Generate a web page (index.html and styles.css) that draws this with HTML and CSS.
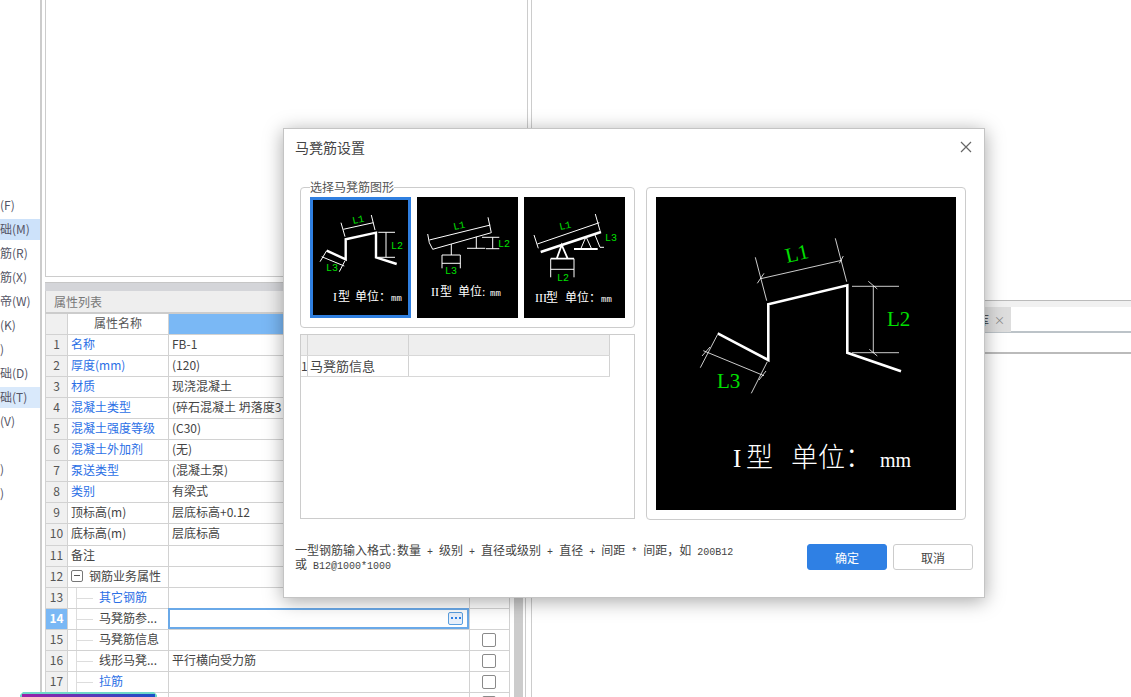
FILE: index.html
```html
<!DOCTYPE html>
<html>
<head>
    <title>马凳筋设置</title>
    <link rel="stylesheet" href="styles.css">
</head>
<body>
    <div class="app">
        <div class="side">
            <div class="side-item">(F)</div>
            <div class="side-item picked">础(M)</div>
            <div class="side-item">筋(R)</div>
            <div class="side-item">筋(X)</div>
            <div class="side-item">帝(W)</div>
            <div class="side-item">(K)</div>
            <div class="side-item">)</div>
            <div class="side-item">础(D)</div>
            <div class="side-item hovered">础(T)</div>
            <div class="side-item">(V)</div>
            <div class="side-item"></div>
            <div class="side-item">)</div>
            <div class="side-item">)</div>
        </div>

        <div class="left-col">
            <div class="top-pane"></div>
            <div class="band"></div>
            <div class="panel-title">属性列表</div>
            <div class="panel-body">
                <table class="props">
                    <colgroup>
                        <col class="col-num"><col class="col-name"><col class="col-value"><col class="col-check">
                    </colgroup>
                    <tr class="head"><td class="num"></td><td class="center">属性名称</td><td class="head-value"></td><td class="head-value"></td></tr>
                    <tr><td class="num">1</td><td class="link">名称</td><td>FB-1</td><td></td></tr>
                    <tr><td class="num">2</td><td class="link">厚度(mm)</td><td>(120)</td><td></td></tr>
                    <tr><td class="num">3</td><td class="link">材质</td><td>现浇混凝土</td><td></td></tr>
                    <tr><td class="num">4</td><td class="link">混凝土类型</td><td>(碎石混凝土 坍落度3</td><td></td></tr>
                    <tr><td class="num">5</td><td class="link">混凝土强度等级</td><td>(C30)</td><td></td></tr>
                    <tr><td class="num">6</td><td class="link">混凝土外加剂</td><td>(无)</td><td></td></tr>
                    <tr><td class="num">7</td><td class="link">泵送类型</td><td>(混凝土泵)</td><td></td></tr>
                    <tr><td class="num">8</td><td class="link">类别</td><td>有梁式</td><td></td></tr>
                    <tr><td class="num">9</td><td>顶标高(m)</td><td>层底标高+0.12</td><td></td></tr>
                    <tr><td class="num">10</td><td>底标高(m)</td><td>层底标高</td><td></td></tr>
                    <tr><td class="num">11</td><td>备注</td><td></td><td></td></tr>
                    <tr>
                        <td class="num">12</td>
                        <td><div class="group"><span class="fold"></span>钢筋业务属性</div></td>
                        <td></td><td></td>
                    </tr>
                    <tr><td class="num">13</td><td class="tree link">其它钢筋</td><td></td><td></td></tr>
                    <tr>
                        <td class="num selected">14</td>
                        <td class="tree">马凳筋参...</td>
                        <td class="edit-cell"><div class="editor"><span class="more"><i></i><i></i><i></i></span></div></td>
                        <td></td>
                    </tr>
                    <tr><td class="num">15</td><td class="tree">马凳筋信息</td><td></td><td class="check-cell"><span class="check"></span></td></tr>
                    <tr><td class="num">16</td><td class="tree">线形马凳...</td><td>平行横向受力筋</td><td class="check-cell"><span class="check"></span></td></tr>
                    <tr><td class="num">17</td><td class="tree link">拉筋</td><td></td><td class="check-cell"><span class="check"></span></td></tr>
                    <tr><td class="num"></td><td class="tree"></td><td></td><td class="check-cell"><span class="check"></span></td></tr>
                </table>
                <div class="scroll"></div>
                <div class="split-line"></div>
            </div>
        </div>

        <div class="right-col">
            <div class="tab-band">
                <div class="tab">库<span class="tab-close">×</span></div>
            </div>
            <div class="tab-sub"></div>
        </div>

        <div class="badge"></div>

        <div class="dialog">
            <div class="dialog-head">
                <span>马凳筋设置</span>
                <svg class="close" width="12" height="12" viewBox="0 0 12 12"><path d="M1 1 11 11M11 1 1 11"/></svg>
            </div>
            <div class="dialog-body">
                <div class="dialog-left">
                    <fieldset class="shapes">
                        <legend>选择马凳筋图形</legend>
                        <div class="thumbs">
                            <svg class="thumb active" width="101" height="121" viewBox="0 0 101 121">
                                <polyline class="thick" points="16.7,53.7 35.7,62.3 35.7,42.3 66,35.7 66,60.3 86.7,67"/>
                                <path class="thin" d="M31 25.7 35 39.7M61.3 18 65 33M33.3 32.3 63.3 25.7M68.3 35.3H85M68.3 60.3H85M76 35.3V60.3M16.7 53.7 10 64.7M35 63.7 29.3 74.7M11.7 59.7 34.3 69"/>
                                <text class="dim" x="43" y="27" transform="rotate(-12 43 27)">L1</text>
                                <text class="dim" x="81" y="52">L2</text>
                                <text class="dim" x="16" y="74">L3</text>
                                <text class="cap" x="23" y="104">I</text>
                                <text class="cap" x="28" y="104">型</text>
                                <text class="cap" x="45" y="104">单位：</text>
                                <text class="cap-unit" x="81" y="104">mm</text>
                            </svg>
                            <svg class="thumb" width="101" height="121" viewBox="0 0 101 121">
                                <path class="thin" d="M12.3 43 73.3 28M15.7 52.3 74.3 35.7M10.7 37 12.3 45.7 15.7 52.3M71 20.3 74.3 35.7M34.3 47V58M25 58H43.3M25 66.3H43.3M25 58V71.3M43.3 58V71.3M59.3 39.7V51.3M50 51.3H68.3M65 40.3H82.3M69 51.7H82.3M75.7 40.3V51.7"/>
                                <text class="dim" x="37" y="33" transform="rotate(-12 37 33)">L1</text>
                                <text class="dim" x="81" y="50">L2</text>
                                <text class="dim" x="28" y="77">L3</text>
                                <text class="cap" x="14" y="99">II</text>
                                <text class="cap" x="23" y="99">型</text>
                                <text class="cap" x="41" y="99">单位:</text>
                                <text class="cap-unit" x="73" y="99">mm</text>
                            </svg>
                            <svg class="thumb" width="101" height="121" viewBox="0 0 101 121">
                                <path class="thick" d="M16.7 55 77 35"/>
                                <path class="mid" d="M26.7 61.7H50M50 52H73.7M32.7 61.7 37.7 48 43.7 61.7"/>
                                <path class="thin" d="M56.7 52 62 39.7 67.7 52M13.3 47 75.3 25.7M10 38 14.3 51.3M71.3 17 76 33.7M71 38 76 50.3H80M26.7 61.7V80.3M50 61.7V80.3M26.7 72.3H50"/>
                                <text class="dim" x="36" y="33" transform="rotate(-12 36 33)">L1</text>
                                <text class="dim" x="81" y="44">L3</text>
                                <text class="dim" x="33" y="84">L2</text>
                                <text class="cap" x="11" y="105">III</text>
                                <text class="cap" x="22" y="105">型</text>
                                <text class="cap" x="41" y="105">单位：</text>
                                <text class="cap-unit" x="77" y="105">mm</text>
                            </svg>
                        </div>
                    </fieldset>
                    <div class="info-box">
                        <div class="info-row info-head"><span class="info-num"></span><span class="info-name"></span><span class="info-value"></span></div>
                        <div class="info-row"><span class="info-num">1</span><span class="info-name">马凳筋信息</span><span class="info-value"></span></div>
                    </div>
                </div>
                <div class="preview">
                    <svg class="preview-pic" width="300" height="313" viewBox="0 0 300 313">
                        <polyline class="pic-thick" points="61.7,136.3 112.3,163 112.3,107.3 191.3,88.3 191.3,155.7 245,174.3"/>
                        <path class="pic-thin" d="M99.3 60.3 110.7 103.7M179.3 41.3 190.7 84.7M104.7 81.7 185.7 63.3M101.3 86.3 108 76.3M183.3 66.3 187.3 59M196 89.3H243M196 155.7H243M217.3 89.3V155.7M212.3 84.3 221.3 92M213.3 152.3 221.3 159M61.3 138 44.3 170.7M111.3 164.7 95.3 196.3M47.3 153.7 108 178.7M46 159 54 150M103 183 110 174"/>
                        <text class="pic-dim" x="131" y="66" transform="rotate(-13 131 66)">L1</text>
                        <text class="pic-dim" x="231" y="129">L2</text>
                        <text class="pic-dim" x="61" y="191">L3</text>
                        <text class="pic-latin" x="77" y="270">I</text>
                        <text class="pic-cap" x="90" y="270">型</text>
                        <text class="pic-cap" x="135" y="270">单位：</text>
                        <text class="pic-unit" x="224" y="270">mm</text>
                    </svg>
                </div>
            </div>
            <div class="dialog-foot">
                <div class="hint">一型钢筋输入格式<span class="mono">:</span>数量<span class="mono"> + </span>级别<span class="mono"> + </span>直径或级别<span class="mono"> + </span>直径<span class="mono"> + </span>间距<span class="mono"> * </span>间距，如<span class="mono"> 200B12</span><br>或<span class="mono"> B12@1000*1000</span></div>
                <div class="buttons">
                    <button class="btn primary">确定</button>
                    <button class="btn">取消</button>
                </div>
            </div>
        </div>
    </div>
</body>
</html>
```

FILE: styles.css
```css
* { box-sizing: border-box; }
body { margin: 0; background: #fff; color: #444; font-family: "Noto Sans CJK SC", "Noto Sans", sans-serif; font-size: 12px; overflow: hidden; }
.app { position: relative; display: flex; width: 1131px; height: 697px; overflow: hidden; background: #fff; }

/* left list, cut off by the panel */
.side { width: 42px; flex: none; padding-top: 195px; border-right: 2px solid #ccc; overflow: hidden; }
.side-item { height: 21px; margin-bottom: 3px; line-height: 19px; white-space: nowrap; color: #556; }
.side-item.picked { background: #cde2fa; }
.side-item.hovered { background: #d9e9fb; }

/* middle column */
.left-col { width: 489px; flex: none; padding-left: 3px; }
.top-pane { width: 483px; height: 277px; border: 1px solid #ccc; border-top: none; }
.band { width: 483px; height: 9px; margin-top: 5px; background: #d4d5d9; border-top: 1px solid #c6c6c6; }
.panel-title { width: 483px; height: 23px; padding-left: 8px; line-height: 21px; background: #eee; border-left: 1px solid #ccc; border-bottom: 2px solid #ccc; color: #777; }
.panel-body { display: flex; height: 400px; }

.props { width: 465px; flex: none; table-layout: fixed; border-collapse: separate; border-spacing: 0; }
.col-num { width: 22px; }
.col-name { width: 101px; }
.col-value { width: 301px; }
.col-check { width: 41px; }
.props td { height: 21px; padding: 0 3px 2px; line-height: 18px; border-left: 1px solid #d2d2d2; border-bottom: 1px solid #d2d2d2; white-space: nowrap; overflow: hidden; color: #444; }
.props td:last-child { border-right: 1px solid #d2d2d2; }
.props td.num { padding: 0 0 2px; text-align: center; background: #f0f0f0; color: #555; }
.props td.num.selected { background: #7ab8f5; color: #fff; font-weight: bold; }
.props td.center { padding: 0 0 2px; text-align: center; }
.props td.check-cell { padding: 0 2px 2px 0; text-align: center; }
.props td.link { color: #2b6fe6; }
.props td.head-value { background: #7ab8f5; }
.props .head td { color: #555; }
.props .head td:first-child { background: #f0f0f0; }
.props td.tree { position: relative; padding-left: 31px; }
.props td.tree::before { content: ""; position: absolute; left: 8px; top: 0; bottom: 0; width: 1px; background: #ddd; }
.props td.tree::after { content: ""; position: absolute; left: 9px; top: 10px; width: 16px; height: 1px; background: #ddd; }

.group { display: flex; align-items: center; gap: 6px; }
.fold { position: relative; width: 12px; height: 12px; flex: none; border: 1px solid #777; border-radius: 2px; }
.fold::after { content: ""; position: absolute; left: 2px; top: 4px; width: 6px; height: 1px; background: #555; }

.props td.edit-cell { padding: 0; overflow: visible; vertical-align: top; }
.editor { display: flex; justify-content: flex-end; align-items: center; height: 21px; margin: -1px 0 0 -1px; padding-right: 4px; border: 2px solid #6aa9e8; }
.more { display: flex; justify-content: center; align-items: center; gap: 2px; width: 15px; height: 13px; background: #e8f0fb; border: 1px solid #5a9fe0; border-radius: 2px; }
.more i { width: 2px; height: 2px; background: #2f80e4; }
.check { display: inline-block; width: 14px; height: 14px; margin-top: 3px; border: 1px solid #8a8a8a; border-radius: 2px; vertical-align: top; background: #fff; }

.scroll { width: 9px; flex: none; margin-left: 4px; background: #ccc; }
.split-line { width: 1px; flex: none; margin-left: 2px; background: #ccc; }

/* right column */
.right-col { flex: 1; padding-top: 300px; border-left: 1px solid #ccc; }
.tab-band { height: 33px; padding-top: 6px; padding-left: 429px; background: linear-gradient(#f1f1f1, #f1f1f1) top / 100% 6px no-repeat; border-top: 1px solid #bbb; border-bottom: 2px solid #bcc3c8; }
.tab { display: flex; align-items: center; justify-content: flex-end; width: 50px; height: 25px; padding-right: 6px; gap: 5px; background: #ddd; color: #333; white-space: nowrap; overflow: hidden; }
.tab-close { color: #888; font-size: 11px; }
.tab-sub { height: 21px; border-bottom: 2px solid #bbb; }

/* strip of another window at the bottom */
.badge { position: absolute; left: 20px; top: 692px; width: 137px; height: 8px; border: 2px solid #6fd8c8; background: linear-gradient(90deg, #9b1fa8, #1a4fc8) padding-box; clip-path: polygon(3px 0, 134px 0, 137px 3px, 137px 8px, 0 8px, 0 3px); }

/* dialog */
.dialog { position: absolute; left: 283px; top: 128px; width: 702px; height: 470px; background: #fff; border: 1px solid #c4c4c4; box-shadow: 0 3px 18px rgba(0, 0, 0, .35); }
.dialog-head { display: flex; justify-content: space-between; align-items: center; height: 35px; padding: 0 12px 0 11px; font-size: 14px; color: #444; }
.close { stroke: #666; stroke-width: 1.2; fill: none; }
.dialog-body { display: flex; gap: 11px; padding-left: 16px; padding-top: 16px; }
.dialog-left { width: 335px; flex: none; }

.shapes { margin: 0; padding: 0 9px 9px; border: 1px solid #ccc; border-radius: 4px; }
.shapes legend { padding: 0; line-height: 14px; font-size: 12px; color: #555; background: #fff; }
.thumbs { display: flex; gap: 6px; margin-top: 3px; }
.thumb { display: block; flex: none; background: #000; }
.thumb.active { outline: 3px solid #2f7fe0; outline-offset: -3px; }
.thin { fill: none; stroke: #fff; stroke-width: 1; }
.thick { fill: none; stroke: #fff; stroke-width: 2.4; }
.mid { fill: none; stroke: #fff; stroke-width: 1.8; }
.dim { fill: #00e000; font-family: "Liberation Mono", monospace; font-size: 10px; }
.cap { fill: #fff; font-family: "Liberation Serif", "Noto Sans CJK SC", serif; font-size: 12px; }
.cap-unit { fill: #fff; font-family: "Liberation Mono", monospace; font-size: 9px; }

.info-box { height: 185px; margin-top: 6px; border: 1px solid #ccc; }
.info-row { display: flex; width: 309px; height: 21px; border-bottom: 1px solid #d8d8d8; font-size: 13px; line-height: 20px; color: #444; }
.info-head { background: #eee; }
.info-num { width: 6px; font-size: 12px; text-align: center; }
.info-name { width: 101px; padding-left: 2px; border-left: 1px solid #d2d2d2; }
.info-value { flex: 1; border-left: 1px solid #d2d2d2; border-right: 1px solid #d2d2d2; }

.preview { width: 320px; height: 333px; margin-top: 7px; padding: 9px; border: 1px solid #ccc; border-radius: 4px; }
.preview-pic { display: block; background: #000; }
.pic-thick { fill: none; stroke: #fff; stroke-width: 2.6; }
.pic-thin { fill: none; stroke: #fff; stroke-width: .8; }
.pic-dim { fill: #00e000; font-family: "Liberation Serif", serif; font-size: 21px; }
.pic-cap { fill: #fff; font-family: "Noto Sans CJK SC", sans-serif; font-size: 27px; font-weight: 300; }
.pic-latin { fill: #fff; font-family: "Liberation Serif", serif; font-size: 25px; }
.pic-unit { fill: #fff; font-family: "Liberation Serif", serif; font-size: 20px; }

.dialog-foot { display: flex; justify-content: space-between; align-items: center; margin-top: 23px; padding: 0 11px; }
.hint { width: 450px; line-height: 14px; font-size: 12px; color: #444; white-space: nowrap; }
.mono { font-family: "Liberation Mono", monospace; font-size: 10px; line-height: 0; white-space: pre; }
.buttons { display: flex; gap: 6px; }
.btn { width: 80px; height: 26px; padding: 0; background: #fff; border: 1px solid #ccc; border-radius: 3px; color: #444; font: inherit; font-size: 12px; }
.btn.primary { background: #2f80e4; border-color: #2f80e4; color: #fff; }
```
